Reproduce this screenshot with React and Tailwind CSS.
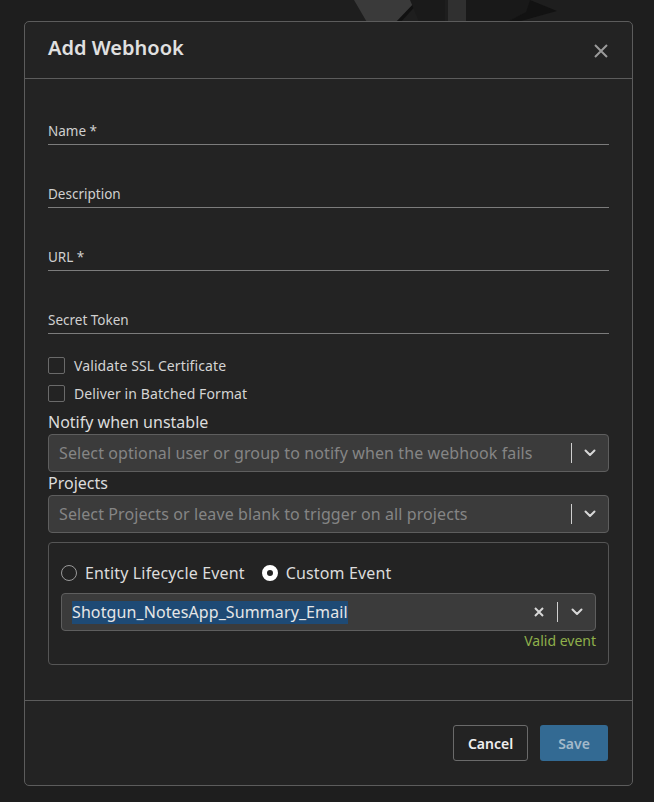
import React from 'react';

const fields = ['Name *', 'Description', 'URL *', 'Secret Token'];
const checks = ['Validate SSL Certificate', 'Deliver in Batched Format'];

const Chevron = () => (
    <svg width="12" height="8" viewBox="0 0 12 8" fill="none">
        <path d="M1.5 1.5L6 6l4.5-4.5" stroke="#d8d8d8" strokeWidth="2" strokeLinecap="round" strokeLinejoin="round" />
    </svg>
);

const SelectBox = ({ placeholder }) => (
    <div className="h-[38px] flex items-center bg-[#3b3b3b] border border-[#5e5e5e] rounded-[4px] pl-[10px]">
        <span className="flex-1 text-[16px] tracking-[0.1px] text-[#858585] truncate">{placeholder}</span>
        <span className="w-px h-[20px] bg-[#cfcfcf]"></span>
        <span className="w-[36px] flex justify-center"><Chevron /></span>
    </div>
);

const App = () => {
    return (
        <div className="relative min-h-screen w-full bg-[#1e1e1e] overflow-hidden font-['Noto_Sans',sans-serif]">
            {/* logo peeking out behind the modal */}
            <svg className="absolute top-0 left-0" width="654" height="24" viewBox="0 0 654 24">
                <polygon points="354,0 417,0 396,24 368,24" fill="#3a3a3a" />
                <polygon points="417,0 421,0 399,24 394,24" fill="#111" />
                <polygon points="410,0 445,0 445,24 420,24" fill="#1a1a1a" />
                <rect x="448" y="0" width="18" height="24" fill="#303030" />
                <polygon points="466,0 530,0 526,12 503,24 466,24" fill="#191919" />
                <polygon points="530,0 557,11 510,24 503,24 526,12" fill="#121212" />
            </svg>

            <div className="relative pt-[21px] pl-[24px] pb-[15px]">
                <div className="w-[609px] bg-[#232323] border border-[#5c5c5c] rounded-[5px] text-[#d4d4d4]">
                    {/* Header */}
                    <div className="h-[57px] flex items-center justify-between pl-[23px] pr-[24px] border-b border-[#5c5c5c]">
                        <h2 className="text-[20px] font-semibold text-[#e0e0e0] pb-[4px]">Add Webhook</h2>
                        <svg width="14" height="14" viewBox="0 0 14 14" className="mt-[1px]">
                            <path d="M1 1l12 12M13 1L1 13" stroke="#9a9a9a" strokeWidth="2" />
                        </svg>
                    </div>

                    {/* Body */}
                    <div className="px-[23px] pt-[3px] pb-[35px]">
                        {fields.map((f) => (
                            <div key={f} className="pt-[40px] pb-[3px] border-b border-[#7c7c7c]">
                                <label className="block text-[13.5px] leading-[19px] text-[#d0d0d0]">{f}</label>
                            </div>
                        ))}

                        <div className="mt-[23px] flex flex-col gap-[11px]">
                            {checks.map((c) => (
                                <div key={c} className="h-[17px] flex items-center gap-[9px]">
                                    <span className="w-[17px] h-[17px] border border-[#6a6a6a] rounded-[2px]"></span>
                                    <span className="text-[14px] tracking-[0.1px] text-[#d4d4d4]">{c}</span>
                                </div>
                            ))}
                        </div>

                        <p className="mt-[9px] text-[16px] leading-[23px] text-[#dcdcdc]">Notify when unstable</p>
                        <SelectBox placeholder="Select optional user or group to notify when the webhook fails" />

                        <p className="text-[16px] leading-[23px] text-[#dcdcdc]">Projects</p>
                        <SelectBox placeholder="Select Projects or leave blank to trigger on all projects" />

                        {/* Event */}
                        <div className="mt-[9px] border border-[#555] rounded-[4px] px-[12px] pt-[18px] pb-[13px]">
                            <div className="h-[24px] flex items-center text-[16px] tracking-[0.15px] text-[#dcdcdc]">
                                <span className="w-[16px] h-[16px] rounded-full border border-[#9a9a9a]"></span>
                                <span className="ml-[8px]">Entity Lifecycle Event</span>
                                <span className="ml-[17px] w-[16px] h-[16px] rounded-full border-[5px] border-white bg-[#232323]"></span>
                                <span className="ml-[8px]">Custom Event</span>
                            </div>
                            <div className="mt-[8px] h-[38px] flex items-center bg-[#3b3b3b] border border-[#5e5e5e] rounded-[4px] pl-[10px]">
                                <div className="flex-1">
                                    <span className="bg-[#1e4a75] text-[16px] tracking-[0.1px] leading-[23px] text-[#e6e6e6] inline-block">Shotgun_NotesApp_Summary_Email</span>
                                </div>
                                <svg width="12" height="12" viewBox="0 0 12 12" className="mr-[12px]">
                                    <path d="M2 2l8 8M10 2L2 10" stroke="#d8d8d8" strokeWidth="2" />
                                </svg>
                                <span className="w-px h-[20px] bg-[#cfcfcf]"></span>
                                <span className="w-[37px] flex justify-center"><Chevron /></span>
                            </div>
                            <p className="h-[20px] leading-[20px] text-right text-[14px] text-[#8fb04b]">Valid event</p>
                        </div>
                    </div>

                    {/* Footer */}
                    <div className="border-t border-[#5c5c5c] flex justify-end gap-[12px] pt-[24px] pb-[24px] pr-[24px]">
                        <button className="h-[36px] w-[75px] border border-[#6a6a6a] rounded-[3px] text-[14px] font-semibold text-[#f0f0f0]">Cancel</button>
                        <button className="h-[36px] w-[68px] bg-[#336a93] rounded-[3px] text-[14px] font-semibold text-[#a3b9ca]">Save</button>
                    </div>
                </div>
            </div>
        </div>
    );
};

export default App;
